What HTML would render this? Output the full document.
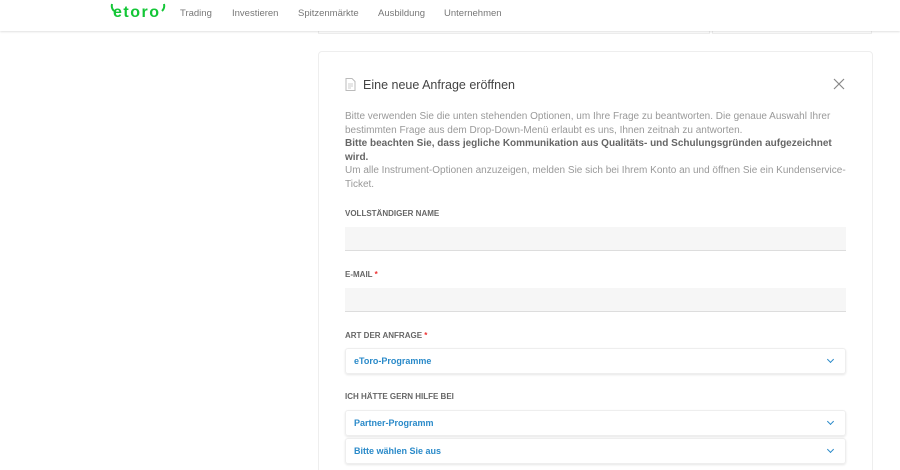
<!DOCTYPE html><html><head><meta charset="utf-8"><style>
html,body{margin:0;width:900px;height:470px;overflow:hidden}
body{background:#fff;font-family:"Liberation Sans",sans-serif;position:relative}
.hdr{position:absolute;left:0;top:0;width:900px;height:31px;background:#fff;box-shadow:0 1px 2px rgba(0,0,0,.12);z-index:2}
.logo{position:absolute;left:113px;top:4px;color:#13c636;font-weight:bold;font-size:16px;letter-spacing:1.5px}
.nav{position:absolute;top:8px;font-size:9.5px;color:#777}
.card{position:absolute;left:318px;top:51px;width:553px;height:440px;border:1px solid #eee;border-radius:4px;background:#fff}
.t{position:absolute;left:345px;font-size:10px;color:#999;line-height:13.5px;width:510px}
.lbl{position:absolute;left:345px;font-size:8px;font-weight:bold;color:#666}
.inp{position:absolute;left:345px;width:501px;height:23px;background:#f6f6f6;border-bottom:1px solid #ddd}
.sel{position:absolute;left:345px;width:499px;height:24px;border:1px solid #eee;border-radius:3px;box-shadow:0 1px 2px rgba(0,0,0,.1);font-size:9px;font-weight:bold;color:#2a8ac9;line-height:24px;text-indent:8px}
.sel:after{content:"";position:absolute;right:12px;top:8px;width:4px;height:4px;border-right:1.2px solid #2a8ac9;border-bottom:1.2px solid #2a8ac9;transform:rotate(45deg)}
.r{color:#e33}
</style></head><body>
<div class="hdr">
<svg style="position:absolute;left:109px;top:2px" width="58" height="20"><path d="M3 2q-1 4 2 7" stroke="#13c636" stroke-width="2" fill="none"/><path d="M55 2q1 4 -2 7" stroke="#13c636" stroke-width="2" fill="none"/></svg>
<div class="logo">etoro</div>
<div class="nav" style="left:180px">Trading</div>
<div class="nav" style="left:232px">Investieren</div>
<div class="nav" style="left:298px">Spitzenmärkte</div>
<div class="nav" style="left:378px">Ausbildung</div>
<div class="nav" style="left:444px">Unternehmen</div>
</div>
<div style="position:absolute;left:318px;top:20px;width:390px;height:13px;border:1px solid #eee;border-top:none"></div>
<div style="position:absolute;left:712px;top:20px;width:158px;height:13px;border:1px solid #eee;border-top:none"></div>
<div class="card"></div>
<svg style="position:absolute;left:345px;top:78px" width="11" height="13"><path d="M1 .5h6l3 3v9H1z" fill="none" stroke="#bbb"/><path d="M3 6h5M3 8h5M3 10h3" stroke="#ccc"/></svg>
<div style="position:absolute;left:363px;top:78px;font-size:12.5px;color:#444">Eine neue Anfrage eröffnen</div>
<svg style="position:absolute;left:833px;top:78px" width="12" height="12"><path d="M1 1L11 11M11 1L1 11" stroke="#888" stroke-width="1.2"/></svg>
<div class="t" style="top:110px">Bitte verwenden Sie die unten stehenden Optionen, um Ihre Frage zu beantworten. Die genaue Auswahl Ihrer bestimmten Frage aus dem Drop-Down-Menü erlaubt es uns, Ihnen zeitnah zu antworten.<br><b style="color:#666">Bitte beachten Sie, dass jegliche Kommunikation aus Qualitäts- und Schulungsgründen aufgezeichnet wird.</b><br>Um alle Instrument-Optionen anzuzeigen, melden Sie sich bei Ihrem Konto an und öffnen Sie ein Kundenservice-Ticket.</div>
<div class="lbl" style="top:209px">VOLLSTÄNDIGER NAME</div>
<div class="inp" style="top:227px"></div>
<div class="lbl" style="top:270px">E-MAIL <span class="r">*</span></div>
<div class="inp" style="top:288px"></div>
<div class="lbl" style="top:331px">ART DER ANFRAGE <span class="r">*</span></div>
<div class="sel" style="top:348px">eToro-Programme</div>
<div class="lbl" style="top:392px">ICH HÄTTE GERN HILFE BEI</div>
<div class="sel" style="top:410px">Partner-Programm</div>
<div class="sel" style="top:438px">Bitte wählen Sie aus</div>
</body></html>
